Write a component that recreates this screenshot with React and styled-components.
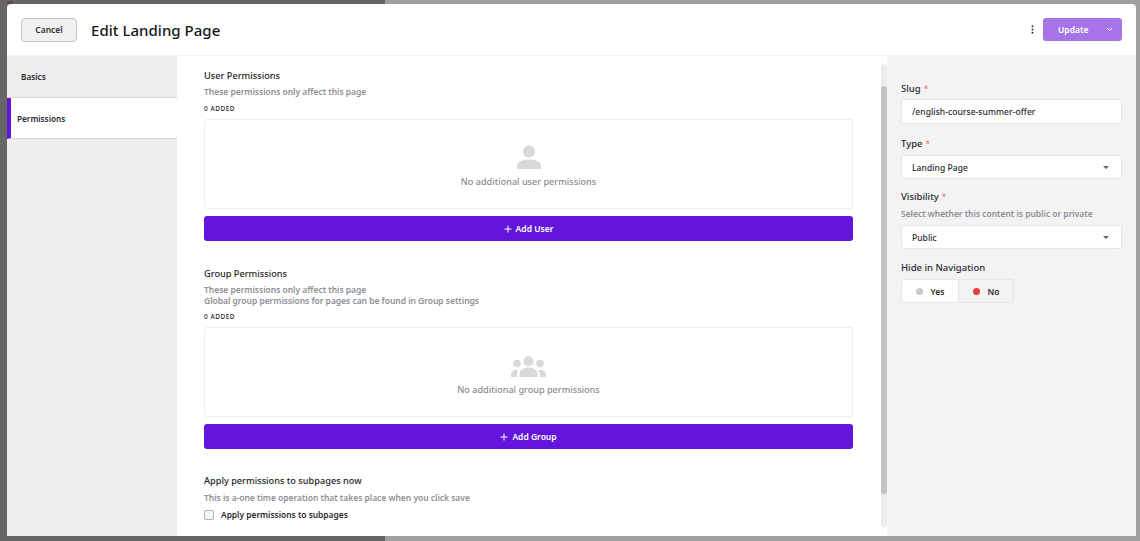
import React from "react";
import styled, { createGlobalStyle } from "styled-components";

const Global = createGlobalStyle`
  html, body {
    margin: 0;
    padding: 0;
    height: 100%;
    overflow: hidden;
    font-family: "Noto Sans", "Open Sans", sans-serif;
    color: #1b1b1f;
  }
  * { box-sizing: border-box; }
`;

const Backdrop = styled.div`
  position: relative;
  width: 1140px;
  height: 541px;
  display: grid;
  grid-template-columns: 385px 1fr;
`;

const Shade = styled.div`
  background: ${(p) => p.$color};
`;

// tip of a logo on the page behind the modal
const BehindMark = styled.span`
  position: absolute;
  left: 7px;
  top: 1px;
  width: 6px;
  height: 3px;
  border-radius: 2px 2px 0 0;
  background: #6b3f52;
`;

const Modal = styled.div`
  position: absolute;
  left: 7px;
  top: 4px;
  width: 1129px;
  height: 532px;
  background: #fff;
  border-radius: 4px 4px 0 0;
  display: flex;
  flex-direction: column;
  overflow: hidden;
`;

const Header = styled.header`
  height: 52px;
  flex: none;
  display: flex;
  align-items: center;
  padding: 0 14px;
  border-bottom: 1px solid #f0f0f0;
`;

const CancelButton = styled.button`
  width: 56px;
  height: 24px;
  border: 1px solid #c4c4c4;
  border-radius: 4px;
  background: #f0f0f0;
  font: 600 8.5px "Noto Sans", sans-serif;
  color: #333;
  padding: 0;
`;

const Title = styled.h1`
  margin: 0 0 0 14px;
  font-size: 15px;
  font-weight: 500;
  letter-spacing: 0.02px;
  color: #17171b;
  flex: 1;
`;

const MoreButton = styled.div`
  width: 20px;
  display: flex;
  justify-content: center;
  margin-right: 1px;
`;

const UpdateButton = styled.div`
  width: 79px;
  height: 23px;
  border-radius: 3px;
  background: #a673e8;
  color: #fff;
  display: flex;
  align-items: center;
  justify-content: space-between;
  padding: 0 9px 0 15px;
  font-size: 8.5px;
  font-weight: 600;
`;

const Body = styled.div`
  flex: 1;
  min-height: 0;
  display: grid;
  grid-template-columns: 170px 1fr 249px;
`;

const Sidebar = styled.nav`
  background: #eeeeee;
  display: flex;
  flex-direction: column;
`;

const Tab = styled.div`
  height: ${(p) => (p.$active ? "41px" : "42px")};
  display: flex;
  align-items: center;
  font-size: 8.2px;
  font-weight: 600;
  color: #2a2a30;
  padding-left: ${(p) => (p.$active ? "6px" : "14px")};
  background: ${(p) => (p.$active ? "#fff" : "transparent")};
  border-left: ${(p) => (p.$active ? "4px solid #6415dc" : "none")};
  border-bottom: 1px solid #d9d9d9;
`;

const Main = styled.main`
  position: relative;
  padding: 13px 34px 0 27px;
  overflow: hidden;
`;

const Track = styled.div`
  position: absolute;
  top: 8px;
  right: 0;
  width: 6px;
  height: 463px;
  background: #ececec;
  border-radius: 3px;
`;

const Thumb = styled.div`
  margin-top: 22px;
  height: 408px;
  background: #c4c4c4;
  border-radius: 3px;
`;

const Section = styled.section`
  margin-bottom: ${(p) => p.$gap || "0"};
`;

const Heading = styled.h2`
  margin: 0;
  font-size: 9.2px;
  line-height: 14px;
  font-weight: 500;
  color: #1f1f25;
`;

const Help = styled.p`
  margin: ${(p) => p.$top || "3px"} 0 0;
  font-size: 8.5px;
  line-height: 11px;
  font-weight: 600;
  letter-spacing: -0.03px;
  color: #8f8f96;
`;

const Count = styled.div`
  margin-top: ${(p) => p.$top};
  font-size: 6.5px;
  line-height: 10px;
  font-weight: 500;
  letter-spacing: 0.5px;
  color: #2a2a30;
`;

const EmptyBox = styled.div`
  margin-top: 5px;
  height: 90px;
  border: 1px solid #eeeeee;
  border-radius: 3px;
  display: flex;
  flex-direction: column;
  align-items: center;
  justify-content: flex-start;
  padding-top: ${(p) => p.$top};
  font-size: 9.1px;
  font-weight: 500;
  color: #8b8b8f;
`;

const EmptyText = styled.div`
  margin-top: ${(p) => p.$top};
  line-height: 13px;
`;

const AddButton = styled.div`
  margin-top: 7px;
  height: 25px;
  border-radius: 3px;
  background: #6415dc;
  color: #fff;
  display: flex;
  align-items: center;
  justify-content: center;
  gap: 4px;
  font-size: 8.5px;
  font-weight: 600;
`;

const CheckRow = styled.label`
  margin-top: 6px;
  display: flex;
  align-items: center;
  gap: 7px;
  font-size: 8.4px;
  font-weight: 600;
  color: #2a2a30;
`;

const CheckBox = styled.span`
  width: 10px;
  height: 10px;
  border: 1px solid #b4b4b4;
  border-radius: 2px;
  background: #f5f5f5;
`;

const Aside = styled.aside`
  background: #f3f3f3;
  padding: 26px 14px 0;
  display: flex;
  flex-direction: column;
`;

const Field = styled.div`
  margin-bottom: ${(p) => p.$gap};
`;

const Label = styled.div`
  font-size: 9.5px;
  line-height: 13px;
  font-weight: 500;
  color: #2a2a30;
`;

const Required = styled.span`
  color: #ee7a7e;
  margin-left: 3px;
  font-size: 8px;
`;

const Input = styled.div`
  margin-top: ${(p) => p.$top || "4px"};
  height: ${(p) => p.$height || "24px"};
  background: #fff;
  border: 1px solid #e6e6e6;
  border-radius: 3px;
  display: flex;
  align-items: center;
  justify-content: space-between;
  padding: 0 12px 0 10px;
  font-size: 8.5px;
  font-weight: 500;
  letter-spacing: 0.05px;
  color: #2a2a30;
`;

const Caret = styled.span`
  width: 0;
  height: 0;
  border-left: 3.5px solid transparent;
  border-right: 3.5px solid transparent;
  border-top: 3.5px solid #666;
`;

const Toggle = styled.div`
  margin-top: 5px;
  width: 113px;
  height: 24px;
  display: grid;
  grid-template-columns: 56px 1fr;
  border: 1px solid #e6e6e6;
  border-radius: 3px;
  overflow: hidden;
`;

const ToggleOption = styled.div`
  display: flex;
  align-items: center;
  justify-content: center;
  gap: 8px;
  font-size: 8.5px;
  font-weight: 600;
  color: #2a2a30;
  background: ${(p) => (p.$on ? "#f3f3f3" : "#fff")};
  border-left: ${(p) => (p.$on ? "1px solid #e6e6e6" : "none")};
`;

const Dot = styled.span`
  width: 7px;
  height: 7px;
  border-radius: 50%;
  background: ${(p) => p.$color};
`;

const UserIcon = () => (
  <svg width="24" height="24" viewBox="0 0 24 24" fill="#d9d9d9">
    <circle cx="12" cy="6.5" r="6" />
    <path d="M0 24v-2.5C0 17 5 14.5 12 14.5S24 17 24 21.5V24z" />
  </svg>
);

const GroupIcon = () => (
  <svg width="35" height="21" viewBox="0 0 35 21" fill="#d9d9d9">
    <circle cx="17.5" cy="5.2" r="5" />
    <circle cx="6" cy="7.5" r="3.8" />
    <circle cx="29" cy="7.5" r="3.8" />
    <path d="M8.5 21v-3c0-4 4-6.5 9-6.5s9 2.500 9 6.500v3z" />
    <path d="M0 21v-1.500c0-3 2-5.500 5-5.800 1.100 0 2 .3 2.800.8C6.500 16 6 18 6 21z" />
    <path d="M35 21v-1.500c0-3-2-5.500-5-5.800-1.100 0-2 .3-2.800.8C28.500 16 29 18 29 21z" />
  </svg>
);

const PlusIcon = () => (
  <svg width="8" height="8" viewBox="0 0 8 8" stroke="#fff" strokeWidth="1">
    <path d="M4 .5v7M.5 4h7" />
  </svg>
);

const DotsIcon = () => (
  <svg width="3" height="9" viewBox="0 0 3 9" fill="#333">
    <circle cx="1.500" cy="1.200" r="1" />
    <circle cx="1.500" cy="4.500" r="1" />
    <circle cx="1.500" cy="7.800" r="1" />
  </svg>
);

const ChevronIcon = () => (
  <svg width="7" height="5" viewBox="0 0 7 5" fill="none" stroke="#fff" strokeWidth="1">
    <path d="M1 1l2.500 2.500L6 1" />
  </svg>
);

export default function App() {
  return (
    <>
      <Global />
      <Backdrop>
        <Shade $color="#666666" />
        <Shade $color="#a0a0a0" />
        <BehindMark />
        <Modal>
          <Header>
            <CancelButton>Cancel</CancelButton>
            <Title>Edit Landing Page</Title>
            <MoreButton>
              <DotsIcon />
            </MoreButton>
            <UpdateButton>
              Update
              <ChevronIcon />
            </UpdateButton>
          </Header>
          <Body>
            <Sidebar>
              <Tab>Basics</Tab>
              <Tab $active>Permissions</Tab>
            </Sidebar>
            <Main>
              <Section $gap="26px">
                <Heading>User Permissions</Heading>
                <Help>These permissions only affect this page</Help>
                <Count $top="7px">0 ADDED</Count>
                <EmptyBox $top="25px">
                  <UserIcon />
                  <EmptyText $top="6px">No additional user permissions</EmptyText>
                </EmptyBox>
                <AddButton>
                  <PlusIcon />
                  Add User
                </AddButton>
              </Section>
              <Section $gap="25px">
                <Heading>Group Permissions</Heading>
                <Help>
                  These permissions only affect this page
                  <br />
                  Global group permissions for pages can be found in Group settings
                </Help>
                <Count $top="6px">0 ADDED</Count>
                <EmptyBox $top="28px">
                  <GroupIcon />
                  <EmptyText $top="6px">No additional group permissions</EmptyText>
                </EmptyBox>
                <AddButton>
                  <PlusIcon />
                  Add Group
                </AddButton>
              </Section>
              <Section>
                <Heading>Apply permissions to subpages now</Heading>
                <Help $top="4px">This is a-one time operation that takes place when you click save</Help>
                <CheckRow>
                  <CheckBox />
                  Apply permissions to subpages
                </CheckRow>
              </Section>
              <Track>
                <Thumb />
              </Track>
            </Main>
            <Aside>
              <Field $gap="13px">
                <Label>
                  Slug<Required>*</Required>
                </Label>
                <Input $height="25px">/english-course-summer-offer</Input>
              </Field>
              <Field $gap="11px">
                <Label>
                  Type<Required>*</Required>
                </Label>
                <Input $top="5px">
                  Landing Page
                  <Caret />
                </Input>
              </Field>
              <Field $gap="12px">
                <Label>
                  Visibility<Required>*</Required>
                </Label>
                <Help $top="5px">Select whether this content is public or private</Help>
                <Input $top="6px">
                  Public
                  <Caret />
                </Input>
              </Field>
              <Field>
                <Label>Hide in Navigation</Label>
                <Toggle>
                  <ToggleOption>
                    <Dot $color="#c8c8c8" />
                    Yes
                  </ToggleOption>
                  <ToggleOption $on>
                    <Dot $color="#ea3a3a" />
                    No
                  </ToggleOption>
                </Toggle>
              </Field>
            </Aside>
          </Body>
        </Modal>
      </Backdrop>
    </>
  );
}
